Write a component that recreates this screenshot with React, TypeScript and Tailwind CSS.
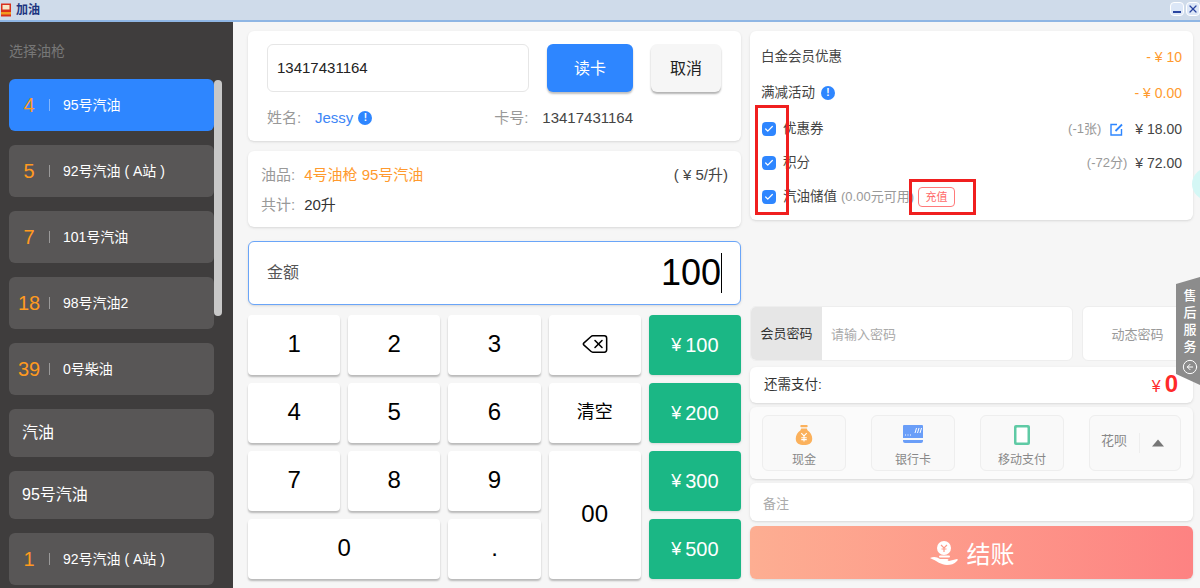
import React from 'react';
import { Check, CircleArrowLeft, Delete, X } from 'lucide-react';

const FONT = { fontFamily: '"Liberation Sans", "Noto Sans CJK SC", sans-serif' };

const pumps = [
  { no: '4', name: '95号汽油', active: true },
  { no: '5', name: '92号汽油 ( A站 )' },
  { no: '7', name: '101号汽油' },
  { no: '18', name: '98号汽油2' },
  { no: '39', name: '0号柴油' },
  { name: '汽油' },
  { name: '95号汽油' },
  { no: '1', name: '92号汽油 ( A站 )' },
];

const InfoDot = () => (
  <span className="inline-flex size-3.5 items-center justify-center rounded-full bg-[#2e86ff] text-[10px] font-bold leading-none text-white">
    !
  </span>
);

const Tick = () => (
  <span className="ml-px flex size-3.5 items-center justify-center rounded-sm bg-[#2e86ff] text-white">
    <Check className="size-2.5" strokeWidth={3} />
  </span>
);

const Key = ({ className = '', children }: { className?: string; children: React.ReactNode }) => (
  <div className={`flex items-center justify-center rounded-sm bg-white pb-0.5 text-black shadow-[0_2px_2px_rgba(0,0,0,0.25)] ${className}`}>
    {children}
  </div>
);

const Quick = ({ value }: { value: string }) => (
  <div className="flex items-center justify-center gap-1 rounded-sm bg-[#1bb785] text-xl text-white shadow-sm">
    <span className="text-lg">¥</span>
    {value}
  </div>
);

const PayButton = ({ icon, label }: { icon: React.ReactNode; label: string }) => (
  <div className="flex w-21 flex-col items-center justify-between rounded-md border border-[#eeeeee] bg-[#f9f9f9] pb-0.5 pt-2 text-xs text-[#888888]">
    {icon}
    <span>{label}</span>
  </div>
);

export default function App() {
  return (
    <div className="relative flex h-screen w-full flex-col overflow-hidden bg-[#f6f6f6]" style={FONT}>
      {/* window title bar */}
      <div className="flex h-5.5 shrink-0 items-center justify-between border-b-2 border-[#8fb6e4] bg-[#cfdbea]">
        <div className="flex items-center gap-1 text-xs font-bold text-[#1d3580]">
          <svg viewBox="0 0 12 14" className="h-3.5 w-3">
            <rect x="1" y="0.5" width="10" height="13" fill="#d9301c" />
            <rect x="2.5" y="2" width="7" height="4.5" fill="#f6e7c8" />
            <rect x="1" y="9" width="10" height="2.5" fill="#f29a1f" />
          </svg>
          加油
        </div>
        <div className="flex gap-0.5 pb-0.5">
          <div className="flex size-3.5 items-end justify-center rounded-sm border border-white bg-[#dce7f7] pb-0.5">
            <div className="h-0.5 w-2 bg-[#2a45a0]" />
          </div>
          <div className="flex size-3.5 items-center justify-center rounded-sm border border-white bg-[#dce7f7] text-[#2a45a0]">
            <X className="size-3" strokeWidth={2.5} />
          </div>
        </div>
      </div>

      <div className="flex min-h-0 flex-1">
        {/* pump list */}
        <div className="relative w-[233px] shrink-0 overflow-hidden bg-[#3f3d3d] pl-2.25 pr-4.75">
          <div className="pb-4.5 pt-4.75 text-sm text-[#777777]">选择油枪</div>
          <div className="flex flex-col gap-3.5">
            {pumps.map((p, i) => (
              <div
                key={i}
                className={`flex shrink-0 items-center rounded-md text-sm text-white ${p.no ? 'h-13' : 'h-12'} ${p.active ? 'bg-[#2e86ff]' : 'bg-[#585656]'}`}
              >
                {p.no ? (
                  <>
                    <span className="w-10 text-center text-xl text-[#ff9a1f]">{p.no}</span>
                    <span className="h-3 w-px bg-white/40" />
                    <span className="pl-3.25">{p.name}</span>
                  </>
                ) : (
                  <span className="pl-3.25 text-base">{p.name}</span>
                )}
              </div>
            ))}
          </div>
          <div className="absolute right-2.75 top-14.5 h-59 w-2 rounded-full bg-[#c8c8c8]" />
        </div>

        {/* card + keypad */}
        <div className="ml-[15px] flex w-[493px] shrink-0 flex-col pt-[9px]">
          <div className="h-27.5 rounded-md bg-white px-[19px] pt-3.25 shadow-sm">
            <div className="flex h-12">
              <div className="flex w-[262px] items-center rounded-md border border-[#e6e6e6] px-2.25 text-[15px] text-[#222222]">
                13417431164
              </div>
              <div className="ml-4.5 flex w-21.5 items-center justify-center rounded-md bg-[#2e86ff] pt-0.5 text-base text-white shadow-[0_2px_2px_rgba(0,0,0,0.25)]">
                读卡
              </div>
              <div className="ml-4.5 flex w-17.5 items-center justify-center rounded-md bg-[#f6f6f6] pt-0.5 text-base text-[#222222] shadow-[0_2px_2px_rgba(0,0,0,0.3)]">
                取消
              </div>
            </div>
            <div className="mt-3.75 flex items-center text-[15px]">
              <span className="w-12 text-[#999999]">姓名:</span>
              <span className="text-[#3d86f6]">Jessy</span>
              <span className="ml-1.25 mr-30.5 flex"><InfoDot /></span>
              <span className="w-12 text-[#999999]">卡号:</span>
              <span className="text-[#444444]">13417431164</span>
            </div>
          </div>

          <div className="mt-2.5 h-19 rounded-md bg-white px-3.25 pt-3.5 text-[15px] leading-5 shadow-sm">
            <div className="flex justify-between">
              <div>
                <span className="mr-2.25 text-[#999999]">油品:</span>
                <span className="text-[#ff9a2e]">4号油枪 95号汽油</span>
              </div>
              <span className="text-[#444444]">( ¥ 5/升)</span>
            </div>
            <div className="mt-2.5">
              <span className="mr-2.25 text-[#999999]">共计:</span>
              <span className="text-[#333333]">20升</span>
            </div>
          </div>

          <div className="mt-3.5 flex h-16 items-center justify-between rounded-md border border-[#6aa5f8] bg-white pl-4.5 pr-4.5 shadow-sm">
            <span className="text-base text-[#555555]">金额</span>
            <span className="flex items-center text-4xl text-black">
              100
              <span className="h-10 w-px bg-black" />
            </span>
          </div>

          <div className="mt-2.5 grid h-66 grid-cols-5 grid-rows-4 gap-2 text-2xl">
            <Key>1</Key>
            <Key>2</Key>
            <Key>3</Key>
            <Key><Delete className="size-7" strokeWidth={1.3} /></Key>
            <Quick value="100" />
            <Key>4</Key>
            <Key>5</Key>
            <Key>6</Key>
            <Key className="text-lg">清空</Key>
            <Quick value="200" />
            <Key>7</Key>
            <Key>8</Key>
            <Key>9</Key>
            <Key className="row-span-2">00</Key>
            <Quick value="300" />
            <Key className="col-span-2">0</Key>
            <Key>.</Key>
            <Quick value="500" />
          </div>
        </div>

        {/* discounts + payment */}
        <div className="ml-2.25 flex w-[443px] shrink-0 flex-col pt-[9px]">
          <div className="flex h-[189px] flex-col rounded-md bg-white px-2.75 pt-2 text-[13.5px] text-[#444444] shadow-sm">
            <div className="flex h-9 items-center justify-between">
              <span>白金会员优惠</span>
              <span className="text-sm text-[#ff9a2e]">- ¥ 10</span>
            </div>
            <div className="flex h-9 items-center justify-between">
              <span className="flex items-center gap-1.5">满减活动 <InfoDot /></span>
              <span className="text-sm text-[#ff9a2e]">- ¥ 0.00</span>
            </div>
            <div className="flex h-9 items-center justify-between">
              <span className="flex items-center gap-1.75"><Tick />优惠券</span>
              <span className="flex items-center text-sm">
                <span className="text-[13px] text-[#999999]">(-1张)</span>
                <svg viewBox="0 0 13 13" className="ml-2.25 mr-3 size-3.25 text-[#2e86ff]" fill="none" stroke="currentColor">
                  <path d="M7 1.5H1v10.5h10.5V6" strokeWidth="1.4" />
                  <path d="M5.5 8L12 1.5" strokeWidth="1.8" />
                </svg>
                ¥ 18.00
              </span>
            </div>
            <div className="flex h-8 items-center justify-between">
              <span className="flex items-center gap-1.75"><Tick />积分</span>
              <span className="flex items-center gap-2 text-sm">
                <span className="text-[13px] text-[#999999]">(-72分)</span>
                ¥ 72.00
              </span>
            </div>
            <div className="flex h-9 items-center">
              <span className="flex items-center gap-1.75"><Tick />汽油储值</span>
              <span className="ml-1 text-[13px] text-[#999999]">(0.00元可用)</span>
              <span className="ml-1 flex h-5 w-9.25 items-center justify-center rounded-sm border border-[#ff7a7a] text-[11px] text-[#ff6b6b]">充值</span>
            </div>
          </div>

          <div className="mt-[86px] flex h-[55px] gap-2.25 text-[13px]">
            <div className="flex w-[323px] overflow-hidden rounded-md border border-[#eeeeee] bg-white">
              <div className="flex w-[71px] items-center justify-center bg-[#e6e6e6] text-[#333333]">会员密码</div>
              <div className="flex items-center pl-2.25 pt-0.5 text-[#aaaaaa]">请输入密码</div>
            </div>
            <div className="flex flex-1 items-center justify-center rounded-l-md border border-[#eeeeee] bg-white pt-0.5 text-[#999999]">
              动态密码
            </div>
          </div>

          <div className="mt-1.5 flex h-9 items-center justify-between rounded-md bg-white pl-3.5 pr-3.75 text-[13.5px] text-[#333333] shadow-sm">
            <span>还需支付:</span>
            <span className="flex items-baseline gap-1 font-bold text-[#ff2a2a]">
              <span className="text-base font-normal">¥</span>
              <span className="text-2xl leading-none">0</span>
            </span>
          </div>

          <div className="mt-1 flex h-[72px] gap-6.25 rounded-md bg-[#fbfbfb] px-3 py-2 shadow-sm">
            <PayButton
              label="现金"
              icon={
                <svg viewBox="0 0 20 24" className="h-5.5 w-5">
                  <rect x="6" y="1" width="8" height="2.5" rx="1" fill="#fbb15c" />
                  <path d="M7 5h6l1 2c3 2 5 5 5 9 0 5-4 7-9 7s-9-2-9-7c0-4 2-7 5-9z" fill="#fbb15c" />
                  <path d="M7 10l3 3 3-3M10 13v6M7 15h6M7 17h6" stroke="#fff" strokeWidth="1.2" fill="none" />
                </svg>
              }
            />
            <PayButton
              label="银行卡"
              icon={
                <svg viewBox="0 0 22 20" className="h-5 w-5.5">
                  <path d="M2 1h18a1 1 0 0 1 1 1v12H1V2a1 1 0 0 1 1-1z" fill="#6a9ef8" />
                  <path d="M1 16h20v1a2 2 0 0 1-2 2H3a2 2 0 0 1-2-2z" fill="#6a9ef8" />
                  <path d="M13 9l1.5-5M15.5 9L17 4M18 9l1.5-5" stroke="#fff" strokeWidth="1" />
                  <path d="M3 11h1M5.5 11h1M8 11h1" stroke="#fff" strokeWidth="1" />
                </svg>
              }
            />
            <PayButton
              label="移动支付"
              icon={
                <svg viewBox="0 0 18 22" className="h-5.5 w-4.5">
                  <rect x="1" y="1" width="16" height="20" rx="2" fill="#5fcaa5" />
                  <rect x="3.5" y="3.5" width="11" height="15" rx="0.5" fill="#fff" />
                </svg>
              }
            />
            <div className="flex flex-1 items-center rounded-md border border-[#eeeeee] bg-[#f9f9f9] pl-2.75 text-[13px] text-[#888888]">
              <span className="pb-1">花呗</span>
              <span className="mx-3 h-5 w-px bg-[#eeeeee]" />
              <svg viewBox="0 0 12 7" className="h-2 w-3">
                <path d="M6 0l6 7H0z" fill="#777777" />
              </svg>
            </div>
          </div>

          <div className="mt-1 flex h-9.5 items-center rounded-md bg-white pl-3.25 pt-1 text-[13px] text-[#aaaaaa] shadow-sm">备注</div>

          <div className="mt-1.25 flex h-13.25 items-center justify-center gap-2 rounded-md bg-gradient-to-r from-[#fdae92] to-[#fd8282] text-2xl text-white shadow-sm">
            <svg viewBox="0 0 30 26" className="h-6.5 w-7.5">
              <circle cx="15" cy="8" r="7" fill="#fff" />
              <path d="M12 5l3 3 3-3M15 8v4M12.5 9h5" stroke="#fd9a88" strokeWidth="1.2" fill="none" />
              <rect x="10" y="15.5" width="11" height="2" rx="1" fill="#fff" />
              <path d="M1 18c4-2 7-1 10 1h7c2 0 2 2 0 2h-5 7l8-2c1 0 1 1 0 2-3 3-6 4-10 4-6 0-10-4-17-7z" fill="#fff" />
            </svg>
            <span className="pt-1">结账</span>
          </div>
        </div>
      </div>

      {/* after-sales tab */}
      <div className="absolute right-0 top-[277px] flex h-27 w-6 flex-col items-center pl-1">
        <svg viewBox="0 0 24 108" className="absolute inset-0 h-full w-full" preserveAspectRatio="none">
          <polygon points="0,7 24,0 24,108 0,97" fill="#8c8c8c" />
        </svg>
        <div className="relative flex flex-col items-center pt-2.5 text-[13px] font-medium leading-4.25 text-white">
          <span>售</span>
          <span>后</span>
          <span>服</span>
          <span>务</span>
          <CircleArrowLeft className="mt-1 size-4" strokeWidth={1.5} />
        </div>
      </div>

      {/* teal edge of a floating button */}
      <div className="absolute -right-6 top-[168px] size-8 rounded-full bg-[#d4f7f5]" />

      {/* red annotation boxes */}
      <div className="absolute left-[755px] top-[105px] h-[110px] w-[34px] border-[3px] border-[#f01f1f]" />
      <div className="absolute left-[909px] top-[179px] h-9 w-[67px] border-[3px] border-[#f01f1f]" />
    </div>
  );
}
